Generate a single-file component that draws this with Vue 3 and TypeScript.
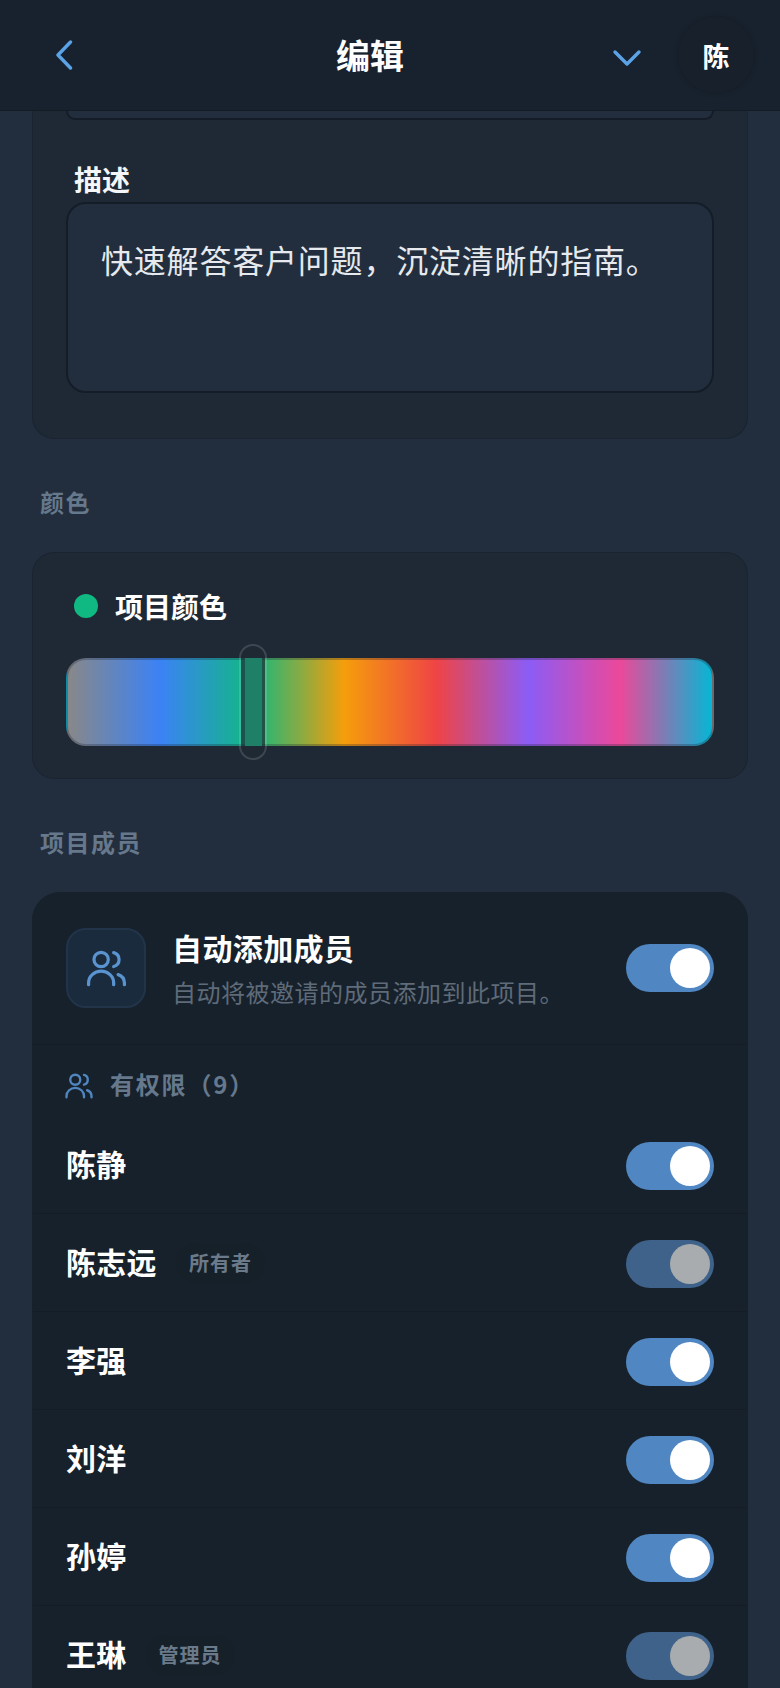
<script setup lang="ts">
interface Member { name: string; badge?: string; locked?: boolean }
const members: Member[] = [
  { name: '陈静' },
  { name: '陈志远', badge: '所有者', locked: true },
  { name: '李强' },
  { name: '刘洋' },
  { name: '孙婷' },
  { name: '王琳', badge: '管理员', locked: true },
]
</script>

<template>
  <div class="app">
    <header class="topbar">
      <svg class="back" viewBox="0 0 18 30" width="18" height="30" fill="none">
        <path d="M15.5 2 3 15l12.5 13" stroke="#5ba3e6" stroke-width="3.4" stroke-linecap="round" stroke-linejoin="round" />
      </svg>
      <h1 class="title">编辑</h1>
      <svg class="down" viewBox="0 0 30 18" width="30" height="18" fill="none">
        <path d="M3 3 15 15 27 3" stroke="#5ba3e6" stroke-width="3.4" stroke-linecap="round" stroke-linejoin="round" />
      </svg>
      <div class="avatar">陈</div>
    </header>

    <main class="content">
      <section class="card card-desc">
        <div class="input-stub"></div>
        <label class="field-label">描述</label>
        <div class="textarea">快速解答客户问题，沉淀清晰的指南。</div>
      </section>

      <h2 class="section-label label-color">颜色</h2>
      <section class="card card-color">
        <div class="color-head">
          <span class="dot"></span>
          <span class="color-name">项目颜色</span>
        </div>
        <div class="slider">
          <div class="thumb"><div class="thumb-fill"></div></div>
        </div>
      </section>

      <h2 class="section-label label-members">项目成员</h2>
      <section class="members">
        <div class="auto-row">
          <div class="icon-box">
            <svg viewBox="0 0 24 24" width="43" height="43" fill="none" stroke="#5a94d0" stroke-width="1.8" stroke-linecap="round" stroke-linejoin="round">
              <circle cx="9" cy="7" r="4" />
              <path d="M2 21v-1a7 6.5 0 0 1 14 0v1" />
              <path d="M22 21v-1a5 5 0 0 0-3.5-4.6" />
              <path d="M16 3.13a4 4 0 0 1 0 7.75" />
            </svg>
          </div>
          <div class="auto-text">
            <div class="auto-title">自动添加成员</div>
            <div class="auto-sub">自动将被邀请的成员添加到此项目。</div>
          </div>
          <div class="toggle"><span class="knob"></span></div>
        </div>

        <div class="perm-head">
          <svg viewBox="0 0 24 24" width="30" height="30" fill="none" stroke="#4f86c0" stroke-width="1.9" stroke-linecap="round" stroke-linejoin="round">
            <circle cx="9" cy="7" r="4" />
            <path d="M2 21v-1a7 6.5 0 0 1 14 0v1" />
            <path d="M22 21v-1a5 5 0 0 0-3.5-4.6" />
            <path d="M16 3.13a4 4 0 0 1 0 7.75" />
          </svg>
          <span>有权限（9）</span>
        </div>

        <div v-for="m in members" :key="m.name" class="member">
          <span class="member-name">{{ m.name }}</span>
          <span v-if="m.badge" class="badge">{{ m.badge }}</span>
          <div class="toggle" :class="{ locked: m.locked }"><span class="knob"></span></div>
        </div>
      </section>
    </main>
  </div>
</template>

<style>
html, body { margin: 0; background: #222e3d; overflow: hidden; }
</style>

<style scoped>
.app {
  width: 780px;
  height: 1688px;
  overflow: hidden;
  display: flex;
  flex-direction: column;
  background: #222e3d;
  font-family: "Noto Sans CJK SC", "Liberation Sans", sans-serif;
  color: #fff;
}
.topbar {
  flex: none;
  height: 111px;
  box-sizing: border-box;
  border-bottom: 1px solid #131b25;
  background: #18222e;
  display: flex;
  align-items: center;
  padding: 0 26px 0 55px;
}
.back { flex: none; }
.title {
  margin: 0 0 0 263px;
  font-size: 34px;
  line-height: 54px;
  font-weight: 700;
}
.down { margin: 6px 36px 0 auto; flex: none; }
.avatar {
  width: 76px;
  height: 76px;
  flex: none;
  border-radius: 50%;
  background: #17202b;
  box-shadow: 0 0 4px rgba(15, 22, 30, 0.5);
  display: flex;
  align-items: center;
  justify-content: center;
  font-size: 27px;
  font-weight: 700;
}
.content { padding: 0 32px; display: flex; flex-direction: column; }
.card {
  box-sizing: border-box;
  background: #1e2935;
  border: 1px solid #1a2430;
  border-radius: 22px;
}
.card-desc {
  border-top: none;
  border-top-left-radius: 0;
  border-top-right-radius: 0;
  padding: 0 33px;
  height: 328px;
}
.input-stub {
  height: 9px;
  box-sizing: border-box;
  background: #222e3d;
  border: 2px solid #141d27;
  border-top: none;
  border-radius: 0 0 18px 18px;
}
.field-label {
  display: block;
  margin: 37px 0 0 8px;
  font-size: 28px;
  line-height: 44px;
  font-weight: 600;
  color: #f4f6f8;
  height: 45px;
}
.textarea {
  box-sizing: border-box;
  height: 191px;
  background: #222e3d;
  border: 2px solid #141d27;
  border-radius: 20px;
  padding: 30px 33px;
  font-size: 32px;
  line-height: 50px;
  letter-spacing: 0.8px;
  color: #e6e9ed;
}
.section-label {
  margin: 0 0 0 8px;
  font-size: 24px;
  line-height: 36px;
  letter-spacing: 1.5px;
  font-weight: 600;
  color: #66788c;
}
.label-color { margin-top: 45px; margin-bottom: 32px; }
.label-members { margin-top: 45px; margin-bottom: 32px; }
.card-color {
  height: 227px;
  padding: 0 33px;
}
.color-head {
  display: flex;
  align-items: center;
  gap: 17px;
  height: 54px;
  margin-top: 26px;
  padding-left: 8px;
}
.dot { width: 24px; height: 24px; border-radius: 50%; background: #10b981; flex: none; }
.color-name { font-size: 28px; line-height: 44px; font-weight: 600; color: #fff; }
.slider {
  position: relative;
  box-sizing: border-box;
  height: 88px;
  margin-top: 25px;
  border: 2px solid rgba(24, 34, 46, 0.28);
  border-radius: 20px;
  background: linear-gradient(90deg, #888888 0%, #3b82f6 14.28%, #10b981 28.57%, #f59e0b 42.85%, #ef4444 57.14%, #8b5cf6 71.42%, #ec4899 85.71%, #06b6d4 100%);
}
.thumb {
  position: absolute;
  left: 171px;
  top: -16px;
  box-sizing: border-box;
  width: 28px;
  height: 116px;
  border: 2px solid rgba(255, 255, 255, 0.14);
  border-radius: 14px;
  background: rgba(30, 41, 53, 0.7);
  background-clip: padding-box;
  display: flex;
  align-items: center;
  justify-content: center;
}
.thumb-fill { width: 17px; height: 88px; background: #1f8068; }
.members {
  background: #17212b;
  border: 1px solid #17212b;
  border-radius: 28px 28px 0 0;
  box-sizing: border-box;
  padding: 0 33px;
}
.auto-row {
  height: 152px;
  box-sizing: border-box;
  margin: 0 -33px;
  padding: 35px 33px 0;
  border-bottom: 1px solid #141c26;
  display: flex;
  align-items: flex-start;
}
.icon-box {
  width: 80px;
  height: 80px;
  box-sizing: border-box;
  flex: none;
  background: #1a2b3d;
  border: 2px solid #22344a;
  border-radius: 20px;
  display: flex;
  align-items: center;
  justify-content: center;
}
.auto-text { margin-left: 26px; flex: 1; min-width: 0; }
.auto-title { font-size: 30px; line-height: 44px; margin-top: -3px; letter-spacing: 0.4px; font-weight: 600; color: #fff; }
.auto-sub { font-size: 24px; line-height: 36px; margin-top: 5px; letter-spacing: 0.5px; color: #5f6b79; }
.auto-row .toggle { margin-top: 16px; }
.perm-head {
  display: flex;
  align-items: center;
  gap: 16px;
  height: 71px;
  box-sizing: border-box;
  padding-top: 6px;
  margin-left: -2px;
  font-size: 24px;
  letter-spacing: 1.8px;
  font-weight: 600;
  color: #66788c;
}
.perm-head svg { margin-top: 4px; flex: none; }
.member {
  height: 98px;
  box-sizing: border-box;
  margin: 0 -33px;
  padding: 3px 33px 0;
  border-bottom: 1px solid #141c26;
  display: flex;
  align-items: center;
}
.member-name { font-size: 30px; line-height: 44px; margin-bottom: 6px; letter-spacing: 0.3px; font-weight: 600; color: #fff; }
.badge {
  margin: 0 0 2px 19px;
  height: 40px;
  line-height: 40px;
  padding: 0 13px;
  border-radius: 20px;
  background: #162029;
  font-size: 20px;
  letter-spacing: 1px;
  font-weight: 600;
  color: #6b7a8a;
}
.toggle {
  width: 88px;
  height: 48px;
  box-sizing: border-box;
  margin-left: auto;
  flex: none;
  border-radius: 24px;
  background: #5087c2;
  padding: 4px;
  display: flex;
  justify-content: flex-end;
}
.knob { width: 40px; height: 40px; border-radius: 50%; background: #fff; }
.toggle.locked { background: #3e6289; }
.toggle.locked .knob { background: #a9acaf; }
</style>
